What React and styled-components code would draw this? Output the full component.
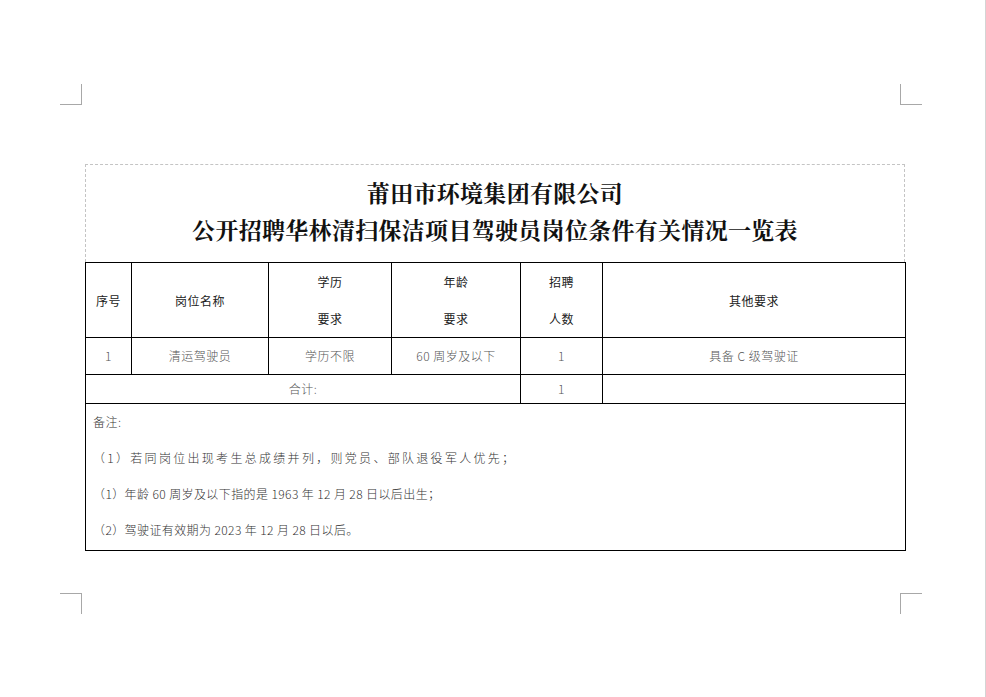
import styled, { createGlobalStyle } from "styled-components";

const GlobalStyle = createGlobalStyle`
  html, body {
    margin: 0;
    padding: 0;
    background: #ffffff;
  }
  body {
    font-family: "Noto Sans CJK SC", "Liberation Sans", sans-serif;
    color: #333;
  }
`;

const Page = styled.div`
  position: relative;
  width: 986px;
  height: 697px;
  box-sizing: border-box;
  border-right: 1px solid #d4d4d4;
  background: #fff;
  overflow: hidden;
`;

// print crop marks in the page corners
const Mark = styled.div`
  position: absolute;
  width: 22px;
  height: 21px;
  box-sizing: border-box;
  border-color: #a8a8a8;
  border-style: solid;
  border-width: 0;
  ${(p) => (p.$top ? "top: 84px; border-bottom-width: 1px;" : "top: 593px; border-top-width: 1px;")}
  ${(p) => (p.$left ? "left: 60px; border-right-width: 1px;" : "left: 900px; border-left-width: 1px;")}
`;

const Sheet = styled.div`
  width: 820px;
  margin: 164px 0 0 85px;
`;

const TitleBox = styled.div`
  height: 98px;
  box-sizing: border-box;
  border: 1px dashed #c4c4c4;
  border-bottom: none;
  padding-top: 9px;
  text-align: center;
`;

const TitleLine = styled.div`
  font-family: "Noto Serif CJK SC", "Noto Sans CJK SC", serif;
  font-weight: 700;
  font-size: 23px;
  line-height: 37px;
  color: #111;
  letter-spacing: 0.3px;
`;

const Table = styled.table`
  width: 820px;
  border-collapse: collapse;
  table-layout: fixed;
  border: 1px solid #000;
`;

const Row = styled.tr`
  height: ${(p) => p.$h}px;
`;

const Cell = styled.td`
  border: 1px solid #000;
  padding: 0;
  text-align: center;
  vertical-align: middle;
  font-size: 12px;
  line-height: ${(p) => (p.$head ? "37px" : "16px")};
  letter-spacing: 0.5px;
  color: ${(p) => (p.$head ? "#222" : "#555")};
  font-weight: ${(p) => (p.$head ? 400 : 300)};
`;

const NotesCell = styled.td`
  border: 1px solid #000;
  padding: 0 0 0 7px;
  text-align: left;
  vertical-align: top;
`;

const NoteLine = styled.div`
  font-size: 12px;
  line-height: 36px;
  color: #333;
  font-weight: 300;
  letter-spacing: ${(p) => p.$ls || 0.5}px;
  white-space: pre;
`;

const cols = [46, 137, 123, 129, 82, 303];

export default function App() {
  return (
    <>
      <GlobalStyle />
      <Page>
        <Mark $top $left />
        <Mark $top />
        <Mark $left />
        <Mark />
        <Sheet>
          <TitleBox>
            <TitleLine>莆田市环境集团有限公司</TitleLine>
            <TitleLine>公开招聘华林清扫保洁项目驾驶员岗位条件有关情况一览表</TitleLine>
          </TitleBox>
          <Table>
            <colgroup>
              {cols.map((w, i) => (
                <col key={i} style={{ width: w }} />
              ))}
            </colgroup>
            <tbody>
              <Row $h={75}>
                <Cell $head>序号</Cell>
                <Cell $head>岗位名称</Cell>
                <Cell $head>
                  学历
                  <br />
                  要求
                </Cell>
                <Cell $head>
                  年龄
                  <br />
                  要求
                </Cell>
                <Cell $head>
                  招聘
                  <br />
                  人数
                </Cell>
                <Cell $head>其他要求</Cell>
              </Row>
              <Row $h={37}>
                <Cell>1</Cell>
                <Cell>清运驾驶员</Cell>
                <Cell>学历不限</Cell>
                <Cell>60 周岁及以下</Cell>
                <Cell>1</Cell>
                <Cell>具备 C 级驾驶证</Cell>
              </Row>
              <Row $h={29}>
                <Cell colSpan={4}>合计:</Cell>
                <Cell>1</Cell>
                <Cell></Cell>
              </Row>
              <Row $h={147}>
                <NotesCell colSpan={6}>
                  <NoteLine>备注:</NoteLine>
                  <NoteLine $ls={2.3}>（1）若同岗位出现考生总成绩并列，则党员、部队退役军人优先；</NoteLine>
                  <NoteLine $ls={0.4}>（1）年龄 60 周岁及以下指的是 1963 年 12 月 28 日以后出生；</NoteLine>
                  <NoteLine $ls={0.4}>（2）驾驶证有效期为 2023 年 12 月 28 日以后。</NoteLine>
                </NotesCell>
              </Row>
            </tbody>
          </Table>
        </Sheet>
      </Page>
    </>
  );
}
